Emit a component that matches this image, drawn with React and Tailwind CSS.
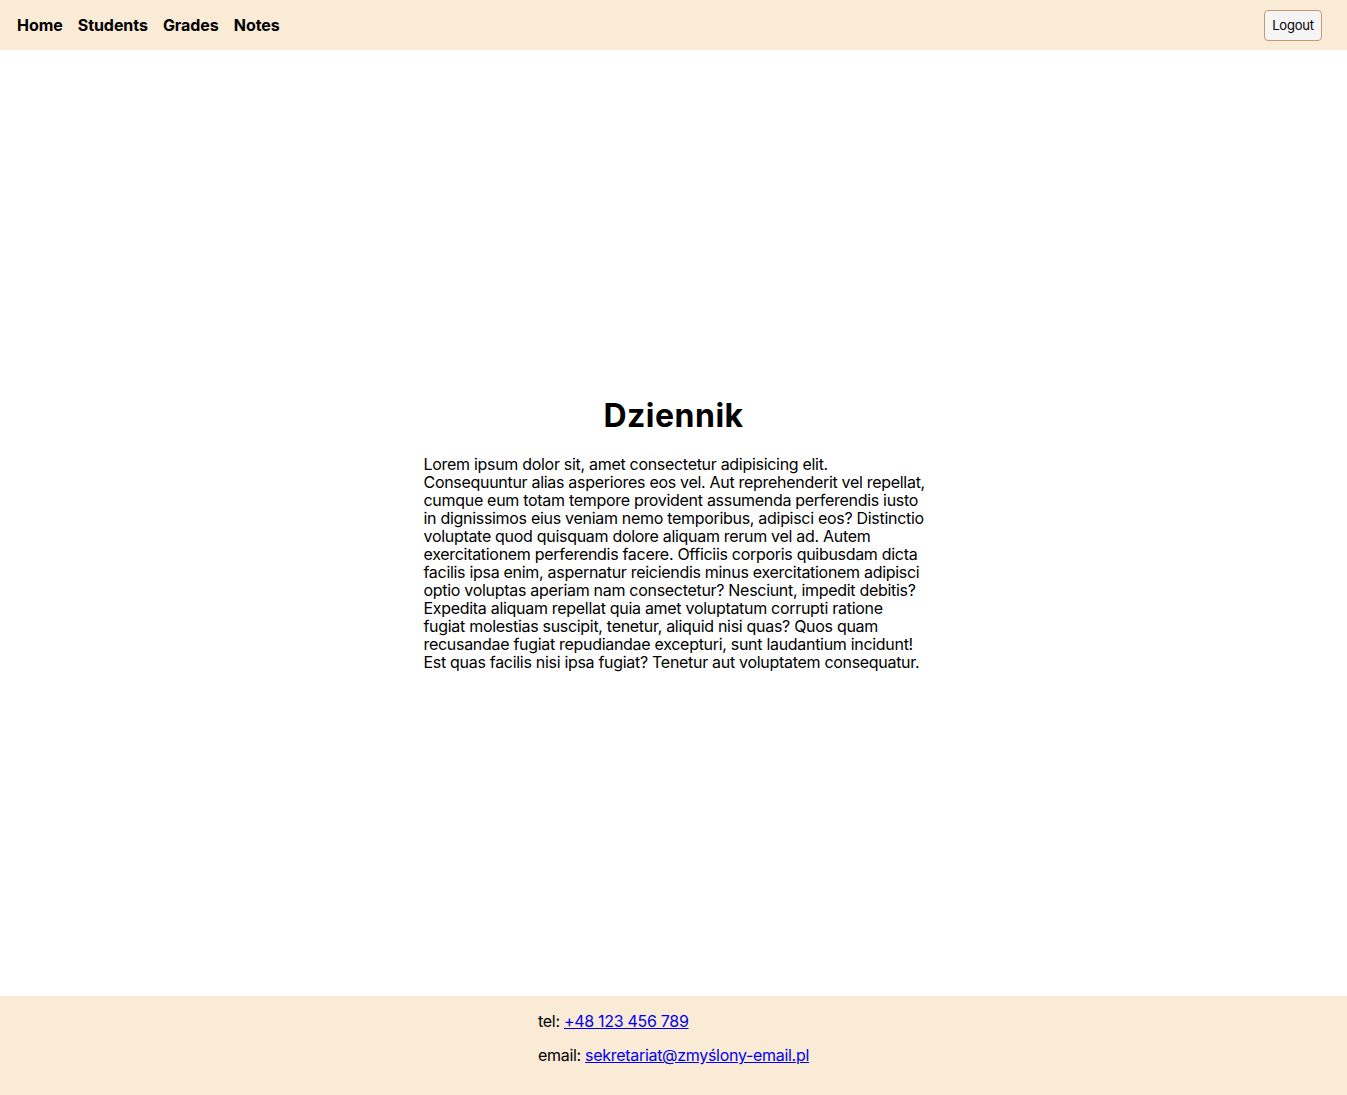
export default function App() {
  const font = { fontFamily: 'Inter, "Liberation Sans", sans-serif' };
  return (
    <div className="min-h-screen flex flex-col bg-white text-black" style={font}>
      <header className="h-[50px] bg-[#faebd7] flex items-center justify-between pl-[17px] pr-[25px]">
        <nav className="flex items-center gap-[15px] text-[16px] font-bold tracking-[-0.05px]">
          <a>Home</a>
          <a>Students</a>
          <a>Grades</a>
          <a>Notes</a>
        </nav>
        <button className="h-[31px] w-[58px] mt-[1px] text-[13px] tracking-[-0.2px] bg-[#f5f5f5] border border-[#c49a6c] rounded-[4px] text-black">
          Logout
        </button>
      </header>
      <main className="flex-1 flex flex-col items-center justify-center pt-[22px]">
        <h1 className="text-[32px] font-bold leading-[37px] tracking-[0.5px] mb-[21px]">Dziennik</h1>
        <p className="w-[500px] text-[16px] leading-[18px] tracking-[-0.3px] pr-[1px] whitespace-nowrap">
          Lorem ipsum dolor sit, amet consectetur adipisicing elit.<br />
          Consequuntur alias asperiores eos vel. Aut reprehenderit vel repellat,<br />
          cumque eum totam tempore provident assumenda perferendis iusto<br />
          in dignissimos eius veniam nemo temporibus, adipisci eos? Distinctio<br />
          voluptate quod quisquam dolore aliquam rerum vel ad. Autem<br />
          exercitationem perferendis facere. Officiis corporis quibusdam dicta<br />
          facilis ipsa enim, aspernatur reiciendis minus exercitationem adipisci<br />
          optio voluptas aperiam nam consectetur? Nesciunt, impedit debitis?<br />
          Expedita aliquam repellat quia amet voluptatum corrupti ratione<br />
          fugiat molestias suscipit, tenetur, aliquid nisi quas? Quos quam<br />
          recusandae fugiat repudiandae excepturi, sunt laudantium incidunt!<br />
          Est quas facilis nisi ipsa fugiat? Tenetur aut voluptatem consequatur.
        </p>
      </main>
      <footer className="h-[99px] bg-[#faebd7] flex justify-center pt-[16px]">
        <div className="text-[16px] leading-[18px] tracking-[-0.3px] flex flex-col gap-[16px]">
          <p>tel: <a className="text-[#0000ee] underline">+48 123 456 789</a></p>
          <p>email: <a className="text-[#0000ee] underline">sekretariat@zmyślony-email.pl</a></p>
        </div>
      </footer>
    </div>
  );
}
